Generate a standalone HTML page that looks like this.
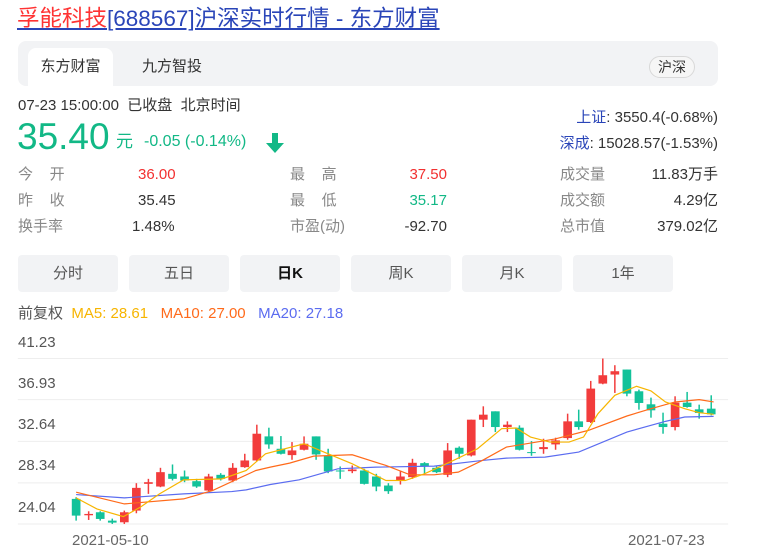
<!DOCTYPE html>
<html><head><meta charset="utf-8">
<style>
*{margin:0;padding:0;box-sizing:border-box}
body{width:757px;height:538px;overflow:hidden;background:#fff;font-family:"Liberation Sans","Noto Sans CJK SC",sans-serif;color:#333;position:relative}
.a{position:absolute;white-space:nowrap}
.title{left:17px;top:4px;font-size:22.5px;line-height:30px;color:#2a45b8;text-decoration:underline}
.title .r{color:#f33}
.tabs{left:18px;top:41px;width:700px;height:45px;background:#f2f3f5;border-radius:8px}
.tab1{left:28px;top:48px;width:85px;height:38px;background:#fff;border-radius:8px 8px 0 0;font-size:15px;line-height:38px;text-align:center;color:#333}
.tab2{left:142px;top:48px;font-size:15px;line-height:38px;color:#333}
.hs{left:649px;top:56px;width:46px;height:22px;border:1px solid #d8d8d8;border-radius:11px;font-size:14px;line-height:20px;text-align:center;color:#333;background:#f6f6f6}
.g{color:#12b886}.red{color:#f23030}.lbl{color:#888}
.btn{top:255px;width:100px;height:37px;background:#f2f3f5;border-radius:4px;font-size:15px;line-height:37px;text-align:center;color:#555}
.st{font-size:15px;line-height:20px}
</style></head><body>
<div class="a title"><span class="r">孚能科技</span>[688567]沪深实时行情 - 东方财富</div>
<div class="a tabs"></div>
<div class="a tab1">东方财富</div>
<div class="a tab2">九方智投</div>
<div class="a hs">沪深</div>
<div class="a" style="left:18px;top:96px;font-size:15px;line-height:20px;color:#333">07-23 15:00:00&nbsp; 已收盘&nbsp; 北京时间</div>
<div class="a g" style="left:17px;top:115px;font-size:37px;line-height:44px">35.40</div>
<div class="a g" style="left:116px;top:131px;font-size:17px;line-height:22px">元</div>
<div class="a g" style="left:144px;top:131px;font-size:16px;line-height:22px">-0.05 (-0.14%)</div>
<svg class="a" style="left:265px;top:132px" width="20" height="22" viewBox="0 0 20 22"><path d="M7 1h6v10h6l-9 10-9-10h6z" fill="#12b886"/></svg>
<div class="a st" style="right:39px;top:108px;color:#333"><span style="color:#2a45b8">上证</span>: 3550.4(-0.68%)</div>
<div class="a st" style="right:39px;top:134px;color:#333"><span style="color:#2a45b8">深成</span>: 15028.57(-1.53%)</div>

<div class="a st lbl" style="left:18px;top:165px">今&nbsp;&nbsp;&nbsp; 开</div>
<div class="a st red" style="left:138px;top:165px">36.00</div>
<div class="a st lbl" style="left:18px;top:191px">昨&nbsp;&nbsp;&nbsp; 收</div>
<div class="a st" style="left:138px;top:191px">35.45</div>
<div class="a st lbl" style="left:18px;top:217px">换手率</div>
<div class="a st" style="left:132px;top:217px">1.48%</div>
<div class="a st lbl" style="left:290px;top:165px">最&nbsp;&nbsp;&nbsp; 高</div>
<div class="a st red" style="right:310px;top:165px">37.50</div>
<div class="a st lbl" style="left:290px;top:191px">最&nbsp;&nbsp;&nbsp; 低</div>
<div class="a st g" style="right:310px;top:191px">35.17</div>
<div class="a st lbl" style="left:290px;top:217px">市盈(动)</div>
<div class="a st" style="right:310px;top:217px">-92.70</div>
<div class="a st lbl" style="left:560px;top:165px">成交量</div>
<div class="a st" style="right:39px;top:165px">11.83万手</div>
<div class="a st lbl" style="left:560px;top:191px">成交额</div>
<div class="a st" style="right:39px;top:191px">4.29亿</div>
<div class="a st lbl" style="left:560px;top:217px">总市值</div>
<div class="a st" style="right:39px;top:217px">379.02亿</div>

<div class="a btn" style="left:18px">分时</div>
<div class="a btn" style="left:129px">五日</div>
<div class="a btn" style="left:240px;color:#111;font-weight:bold">日K</div>
<div class="a btn" style="left:351px">周K</div>
<div class="a btn" style="left:462px">月K</div>
<div class="a btn" style="left:573px">1年</div>

<div class="a" style="left:18px;top:304px;font-size:15px;line-height:20px"><span style="color:#555">前复权</span>&nbsp;&nbsp;<span style="color:#f7b500">MA5: 28.61</span>&nbsp;&nbsp;&nbsp;<span style="color:#ff6a1a">MA10: 27.00</span>&nbsp;&nbsp;&nbsp;<span style="color:#5b6cf0">MA20: 27.18</span></div>
<div class="a" style="left:18px;top:334px;font-size:15px;line-height:18px;color:#555">41.23</div>
<div class="a" style="left:18px;top:375px;font-size:15px;line-height:18px;color:#555">36.93</div>
<div class="a" style="left:18px;top:416px;font-size:15px;line-height:18px;color:#555">32.64</div>
<div class="a" style="left:18px;top:457px;font-size:15px;line-height:18px;color:#555">28.34</div>
<div class="a" style="left:18px;top:499px;font-size:15px;line-height:18px;color:#555">24.04</div>
<div class="a" style="left:72px;top:532px;font-size:15px;line-height:18px;color:#666">2021-05-10</div>
<div class="a" style="left:628px;top:532px;font-size:15px;line-height:18px;color:#666">2021-07-23</div>

<svg class="a" style="left:0;top:290px" width="757" height="248" viewBox="-1 0 1571 742" preserveAspectRatio="none">
<g stroke="#eee">
<line x1="36" y1="205" x2="1510" y2="205" vector-effect="non-scaling-stroke"/>
<line x1="36" y1="328" x2="1510" y2="328" vector-effect="non-scaling-stroke"/>
<line x1="36" y1="453" x2="1510" y2="453" vector-effect="non-scaling-stroke"/>
<line x1="36" y1="577" x2="1510" y2="577" vector-effect="non-scaling-stroke"/>
<line x1="36" y1="700" x2="1510" y2="700" vector-effect="non-scaling-stroke"/>
</g>
<g id="c"></g>
<polyline fill="none" stroke="#5b6cf0" stroke-width="1.2" vector-effect="non-scaling-stroke" points="157,612 257,622 380,610 480,603 510,598 560,582 620,568 700,535 780,530 900,527 1000,510 1050,503 1130,500 1200,485 1300,425 1380,393 1420,380 1480,378"/>
<polyline fill="none" stroke="#ff6a1a" stroke-width="1.2" vector-effect="non-scaling-stroke" points="157,605 257,640 380,625 440,600 530,540 560,530 600,518 650,497 730,493 800,525 850,553 900,553 950,545 1000,510 1050,470 1100,458 1150,446 1220,420 1300,377 1350,355 1400,335 1450,328 1480,335"/>
<polyline fill="none" stroke="#f7b500" stroke-width="1.2" vector-effect="non-scaling-stroke" points="157,622 200,655 255,678 290,650 330,610 380,568 460,565 510,540 550,490 630,460 680,490 730,520 800,570 840,570 880,550 940,510 990,475 1040,415 1070,413 1100,440 1140,455 1180,455 1210,440 1240,370 1275,315 1320,288 1350,302 1380,335 1420,355 1450,367 1480,372"/>
</svg>
<script>
var d=[[157,'g',625,675,620,690],[183,'r',670,674,662,688],[207,'g',665,685,662,690],[232,'g',690,696,684,700],[257,'r',665,695,660,700],[282,'r',592,660,578,668],[307,'r',575,580,565,610],[332,'r',545,588,532,590],[357,'g',550,565,522,570],[382,'g',558,570,540,575],[407,'g',572,588,565,592],[432,'r',558,600,550,602],[457,'g',553,565,548,570],[482,'r',532,570,518,575],[507,'r',510,530,490,532],[532,'r',430,510,403,512],[557,'g',438,462,412,475],[582,'g',475,490,437,492],[605,'r',480,494,455,508],[630,'r',460,478,438,480],[655,'g',438,492,438,508],[680,'g',495,543,475,548],[705,'g',540,543,528,565],[730,'r',537,542,525,548],[755,'g',540,580,535,582],[780,'g',558,588,550,602],[805,'g',585,602,578,610],[830,'r',558,570,540,582],[855,'r',517,560,505,565],[880,'g',518,528,515,550],[905,'g',532,545,528,548],[928,'r',480,553,458,560],[952,'g',472,490,468,505],[977,'r',388,495,388,498],[1002,'r',373,388,348,410],[1027,'g',363,410,363,425],[1052,'r',403,410,393,425],[1077,'g',412,478,405,480],[1102,'g',485,488,452,496],[1127,'r',470,476,445,490],[1152,'r',450,462,442,478],[1177,'r',393,443,370,448],[1200,'g',393,410,358,418],[1225,'r',295,395,272,398],[1250,'r',255,280,205,282],[1275,'r',243,253,225,308],[1300,'g',238,310,238,318],[1325,'g',303,338,298,358],[1350,'g',342,360,322,382],[1375,'g',400,410,367,430],[1400,'r',337,410,318,420],[1425,'g',337,350,305,352],[1450,'g',357,368,343,385],[1475,'g',355,372,315,375]];
var s='';d.forEach(function(c){var col=c[1]=='r'?'#f23c3c':'#12c29a';s+='<line x1="'+c[0]+'" x2="'+c[0]+'" y1="'+c[4]+'" y2="'+c[5]+'" stroke="'+col+'" stroke-width="1.5" vector-effect="non-scaling-stroke"/>';var h=Math.max(c[3]-c[2],3);s+='<rect x="'+(c[0]-9)+'" y="'+c[2]+'" width="18" height="'+h+'" fill="'+col+'"/>';});
document.getElementById('c').innerHTML=s;
</script>
</body></html>
